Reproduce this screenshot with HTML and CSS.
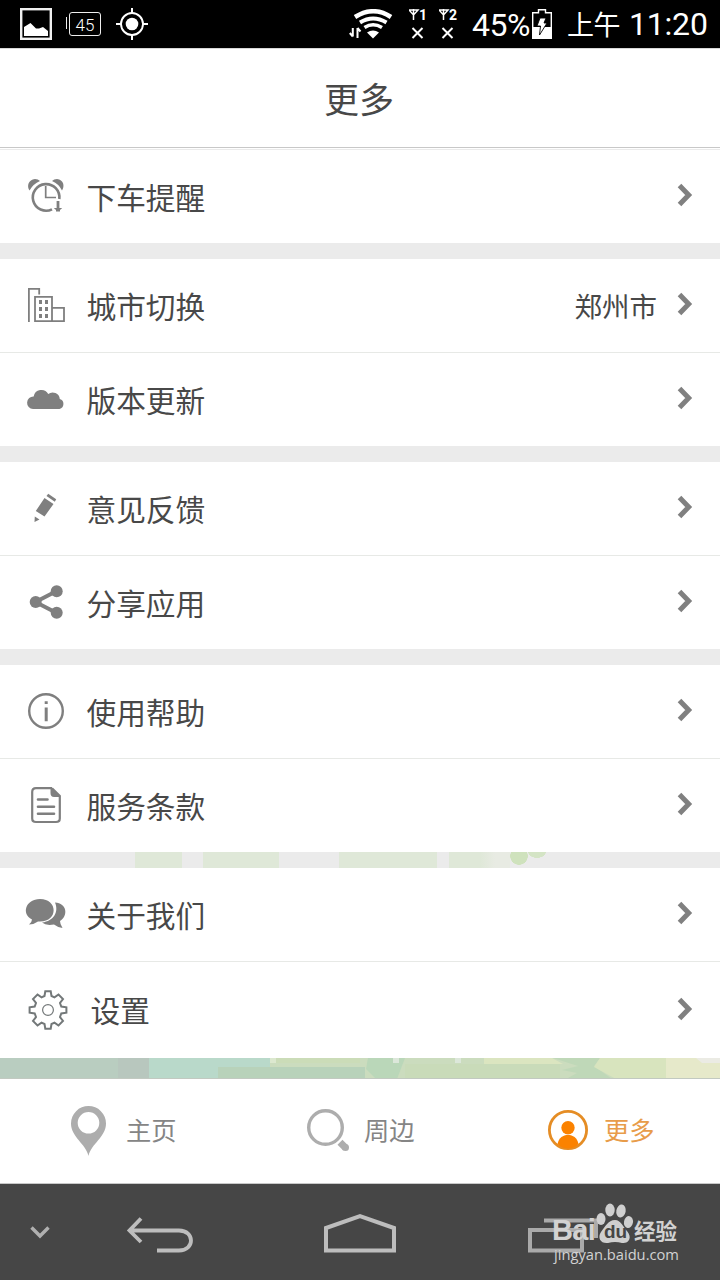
FILE: index.html
```html
<!DOCTYPE html>
<html lang="zh-CN">
<head>
<meta charset="utf-8">
<title>更多</title>
<link rel="stylesheet" href="styles.css">
</head>
<body>
<div class="screen">
  <header class="status">
    <div class="status-left">
      <svg width="32" height="32" viewBox="0 0 32 32"><rect x="1.200" y="1.200" width="29.600" height="29.600" fill="none" stroke="#f0f0f0" stroke-width="2.400"/><path d="M4 28V19L10.500 15L16 20.500H19L23 19L28 23V28Z" fill="#fff"/></svg>
      <span class="mini-battery">45</span>
      <svg width="32" height="32" viewBox="0 0 32 32" fill="none" stroke="#fff"><circle cx="16" cy="16" r="11" stroke-width="1.900"/><circle cx="16" cy="16" r="6.300" fill="#fff" stroke="none"/><path d="M16 0V5M16 27V32M0 16H5M27 16H32" stroke-width="2"/></svg>
    </div>
    <div class="status-right">
      <svg class="wifi" width="44" height="30" viewBox="0 0 44 30"><g fill="none" stroke="#fff"><path d="M6 8Q24.500-3.500 42 8" stroke-width="4.600"/><path d="M11 13.500Q24 5.500 37.500 13.500" stroke-width="4"/><path d="M15.500 18.500Q24 13 33 18.500" stroke-width="3.600"/><path d="M3.800 19V27.500M0.800 24L3.800 27.500M8.500 29V19M8.500 19L11.500 22.500" stroke-width="2"/></g><path d="M18 23.500Q24 19.500 30 23.500L24 29.500Z" fill="#fff"/></svg>
      <span class="sim"><svg width="18" height="30" viewBox="0 0 18 30" fill="none" stroke="#fff" stroke-width="1.500"><path d="M0 1H9L4.500 6ZM4.500 0V11"/><path d="M3.500 19L13.500 29M13.500 19L3.500 29" stroke-width="2"/></svg><b>1</b></span>
      <span class="sim"><svg width="18" height="30" viewBox="0 0 18 30" fill="none" stroke="#fff" stroke-width="1.500"><path d="M0 1H9L4.500 6ZM4.500 0V11"/><path d="M3.500 19L13.500 29M13.500 19L3.500 29" stroke-width="2"/></svg><b>2</b></span>
      <span class="percent">45%</span>
      <svg class="battery" width="20" height="30" viewBox="0 0 20 30"><path d="M.7 29V3.700H6.500V.7H13.500V3.700H19.300V29Z" fill="none" stroke="#fff" stroke-width="1.400"/><path d="M0 18H20V30H0Z" fill="#fff"/><path d="M8 9H14L12 14H15L7.500 26L8.500 17H5Z" fill="#fff" stroke="#000" stroke-width="0.900"/></svg>
      <span class="ampm">上午</span><span class="clock">11:20</span>
    </div>
  </header>

  <h1 class="title">更多</h1>

  <main class="list">
    <section class="group">
      <div class="row">
        <svg class="icon" viewBox="0 0 87 93"><path d="M29.500 40.500C26.500 36 28.500 29.500 35 29Q38 29 40 31Q33 34 29.500 40.500ZM62 40.500C65 36 63.500 29.500 57 29Q54 29 52 31Q59 34 62 40.500Z" fill="#7f7f7f"/><g fill="none" stroke="#7f7f7f"><path d="M52 59.300A13.300 13.300 0 1 1 59.300 49" stroke-width="2.600"/><path d="M45.700 36V47.500H56" stroke-width="1.700"/><path d="M58 51V58" stroke-width="2.800"/></g><path d="M53.800 58H62.200L60 60V61.500H56V60Z" fill="#7f7f7f"/></svg>
        <span class="label">下车提醒</span>
        <svg class="arrow" viewBox="0 0 16 24"><path d="M2.500 2.500L11.700 12L2.500 21.500"/></svg>
      </div>
    </section>
    <section class="group">
      <div class="row">
        <svg class="icon" viewBox="0 0 87 93"><g fill="none" stroke="#7f7f7f" stroke-width="1.800"><path d="M28.900 63V29.900H39.200V35.500M35 62.200V37.900H52V62.200ZM52 48.900H64V62.200H52"/></g><path d="M39 41h3v4h-3zM45 41h3v4h-3zM39 48h3v4h-3zM45 48h3v4h-3zM39 55h3v4h-3zM45 55h3v4h-3z" fill="#7f7f7f"/></svg>
        <span class="label">城市切换</span>
        <span class="value">郑州市</span>
        <svg class="arrow" viewBox="0 0 16 24"><path d="M2.500 2.500L11.700 12L2.500 21.500"/></svg>
      </div>
      <div class="row">
        <svg class="icon" viewBox="0 0 87 93"><path d="M33 56A5.700 5.700 0 0 1 33.700 43.500A7.800 7.800 0 0 1 48.200 41A7.200 7.200 0 0 1 59.800 46A5.200 5.200 0 0 1 59.500 56Z" fill="#7f7f7f"/></svg>
        <span class="label">版本更新</span>
        <svg class="arrow" viewBox="0 0 16 24"><path d="M2.500 2.500L11.700 12L2.500 21.500"/></svg>
      </div>
    </section>
    <section class="group">
      <div class="row">
        <svg class="icon" viewBox="0 0 87 93"><path d="M44.500 36L53.500 42L44.500 54.500L35.800 49ZM46.500 34L48.200 31.800L56.200 37.300L54.800 39.800ZM34.800 54.500L39.500 57.500L34.500 60Z" fill="#7f7f7f"/></svg>
        <span class="label">意见反馈</span>
        <svg class="arrow" viewBox="0 0 16 24"><path d="M2.500 2.500L11.700 12L2.500 21.500"/></svg>
      </div>
      <div class="row">
        <svg class="icon" viewBox="0 0 87 93"><path d="M56.700 35L35.500 46L56.700 57" fill="none" stroke="#7f7f7f" stroke-width="4"/><g fill="#7f7f7f"><circle cx="56.700" cy="35.300" r="6"/><circle cx="35.700" cy="46" r="6"/><circle cx="56.700" cy="56.800" r="6"/></g></svg>
        <span class="label">分享应用</span>
        <svg class="arrow" viewBox="0 0 16 24"><path d="M2.500 2.500L11.700 12L2.500 21.500"/></svg>
      </div>
    </section>
    <section class="group">
      <div class="row">
        <svg class="icon" viewBox="0 0 87 93" fill="none" stroke="#7f7f7f"><circle cx="46" cy="46" r="16.800" stroke-width="2.400"/><path d="M46.200 36.300V39M46.200 42.500V56.300" stroke-width="3"/></svg>
        <span class="label">使用帮助</span>
        <svg class="arrow" viewBox="0 0 16 24"><path d="M2.500 2.500L11.700 12L2.500 21.500"/></svg>
      </div>
      <div class="row">
        <svg class="icon" viewBox="0 0 87 93"><g fill="none" stroke="#7f7f7f" stroke-width="2.200"><path d="M52 29.200H36Q32.200 29.200 32.200 33V59.500Q32.200 63 36 63H56Q59.800 63 59.800 59.500V37L52 29.200"/><path d="M38 40.500H47.500M38 47.700H54M38 54.800H54" stroke-width="2.600" stroke-linecap="round"/></g><path d="M50.500 28.500L60.500 38H54Q50.500 38 50.500 34Z" fill="#7f7f7f"/></svg>
        <span class="label">服务条款</span>
        <svg class="arrow" viewBox="0 0 16 24"><path d="M2.500 2.500L11.700 12L2.500 21.500"/></svg>
      </div>
    </section>
    <section class="group">
      <div class="row">
        <svg class="icon" viewBox="0 0 87 93" fill="#7f7f7f"><path d="M55 34.500C67 35 68.500 48 60 53Q60 56 62.500 60Q57 59 54 56.500Q46 58 42 54.500C54 53 59 44 55 34.500Z"/><path d="M40 31C58 31 58.500 53.500 40 53.500H38Q34 56.500 29 56.500Q32 54 32 51.500C21 46 25.500 31 40 31Z"/></svg>
        <span class="label">关于我们</span>
        <svg class="arrow" viewBox="0 0 16 24"><path d="M2.500 2.500L11.700 12L2.500 21.500"/></svg>
      </div>
      <div class="row row-settings">
        <svg class="icon" viewBox="0 1 87 93" fill="none" stroke="#737879"><path d="M44.500 33L45.300 28.300H50.700L51.500 33L54.500 34.400L58.500 31.500L63 36L60 40L61.300 43.500L66.400 44.300V49.700L61.300 50.500L60 54L63 58L58.500 62.500L54.500 59.600L51.500 61L50.700 65.700H45.300L44.500 61L41.500 59.600L37.500 62.500L33 58L36 54L34.700 50.500L29.600 49.700V44.300L34.700 43.500L36 40L33 36L37.500 31.500L41.500 34.400Z" stroke-width="2"/><circle cx="48" cy="47" r="5.400" stroke-width="1.200"/></svg>
        <span class="label">设置</span>
        <svg class="arrow" viewBox="0 0 16 24"><path d="M2.500 2.500L11.700 12L2.500 21.500"/></svg>
      </div>
    </section>
  </main>
  <svg class="scenery" viewBox="0 0 720 21" preserveAspectRatio="none">
    <path d="M0 0H720V21H0Z" fill="#cbdcbe"/><path d="M0 0H118V21H0Z" fill="#b9cdc0"/><path d="M118 0H149V21H118Z" fill="#b8c7be"/><path d="M149 0H270V9H365V21H149Z" fill="#b9d9ca"/><path d="M218 9H365V21H218Z" fill="#b8d2ba"/><path d="M276 0H360V5H276Z" fill="#cbdcb8"/><path d="M270 0H276V5H270Z" fill="#dce8cf"/>
    <path d="M368 0H405L397 21H376L366 11Z" fill="#bad7b9"/><path d="M393 0H399V5H393ZM455 0H461V5H455Z" fill="#dce7da"/><path d="M405 6H560V21H405Z" fill="#c9dbb9"/><path d="M484 0H552L563 6H484Z" fill="#dbe5c0"/><path d="M553 0H600L594 8L612 21H566L577 15L562 12L578 8Z" fill="#bfd8b8"/><path d="M600 0H666V21H616L594 9Z" fill="#d8e4be"/><path d="M666 0H720V21H666Z" fill="#e6e9ca"/><path d="M696 0H720V5H702Z" fill="#ebebe4"/><path d="M0 20H720V21H0Z" fill="#c2c9c1"/>
  </svg>

  <nav class="tabs">
    <div class="tab"><svg width="126" height="104" viewBox="0 0 126 104"><path fill-rule="evenodd" d="M88.500 77C86 65 71 58 71 44.500A17.500 17.500 0 0 1 106 44.500C106 58 91 65 88.500 77ZM88.500 33A10.800 10.800 0 1 0 88.500 54.600A10.800 10.800 0 1 0 88.500 33Z" fill="#adadad"/></svg><span>主页</span></div>
    <div class="tab"><svg width="124" height="104" viewBox="0 0 124 104" fill="none" stroke="#adadad"><circle cx="85.500" cy="48.500" r="16.800" stroke-width="3.400"/><path d="M100 63.300L105.700 69" stroke-width="7"/><circle cx="105.500" cy="68.500" r="3.500" fill="#adadad" stroke="none"/></svg><span>周边</span></div>
    <div class="tab active"><svg width="124" height="104" viewBox="0 0 124 104"><circle cx="88" cy="51" r="18.600" fill="none" stroke="#e58d25" stroke-width="2.800"/><circle cx="88" cy="48.700" r="6.700" fill="#fb8200"/><path d="M77.500 65C79 58.500 83 56 88 56S97 58.500 98.500 65Q94 69.500 88 69.500T77.500 65Z" fill="#fb8200"/></svg><span>更多</span></div>
  </nav>

  <footer class="system-nav">
    <svg width="80" height="96" viewBox="0 0 80 96"><path d="M31.500 43.500L40 52L48.500 43.500" fill="none" stroke="#b0b0b0" stroke-width="3.400"/></svg>
    <svg width="160" height="96" viewBox="80 0 160 96"><path d="M141 34.500L129.500 46.500L141 58M129.500 46.500H179C195 46.500 195 66.500 179 66.500H157" fill="none" stroke="#bdbdbd" stroke-width="3.800"/></svg>
    <svg width="240" height="96" viewBox="240 0 240 96"><path d="M326 66.500V44L360 32L394 44V66.500Z" fill="none" stroke="#bdbdbd" stroke-width="4"/></svg>
    <svg width="240" height="96" viewBox="480 0 240 96"><path d="M530 46H582V66.500H530ZM544 36.500H596V54" fill="none" stroke="#aaa" stroke-width="4"/></svg>
    <div class="watermark">
      <div class="brand"><span class="bai">Bai</span><span class="paw"><svg width="38" height="42" viewBox="0 0 38 42" fill="#cfcfcf"><ellipse cx="5" cy="16" rx="4.500" ry="6"/><ellipse cx="14" cy="7" rx="4.700" ry="6.500"/><ellipse cx="25" cy="8" rx="4.700" ry="6.500" transform="rotate(10 25 8)"/><ellipse cx="32.500" cy="19" rx="4.500" ry="6" transform="rotate(10 32 19)"/><path d="M19 17C25 17 27 24 31 28C37 35 32 41 26 40Q19 38 12 40C5 41 1 35 5 29C9 24 12 17 19 17Z"/></svg><i>du</i></span><span class="jy">经验</span></div>
      <div class="site">jingyan.baidu.com</div>
    </div>
  </footer>
</div>
</body>
</html>
```
FILE: styles.css
```css
* { box-sizing: border-box; }
body { margin: 0; background: #fff; font-family: Roboto, "Noto Sans CJK SC", sans-serif; color: #484848; }
svg { display: block; flex: none; }
.screen { width: 720px; height: 1280px; display: flex; flex-direction: column; overflow: hidden; }

.status { height: 48px; flex: none; background: #000; color: #fff; display: flex; justify-content: space-between; padding: 0 12px 0 20px; }
.status-left { display: flex; align-items: center; }
.mini-battery { position: relative; width: 32px; height: 24px; margin: 0 15px 0 17px; border: 1.500px solid #eee; border-radius: 3px; font-size: 17px; font-weight: 300; line-height: 24px; text-align: center; }
.mini-battery::before { content: ""; position: absolute; left: -4px; top: 4px; width: 1px; height: 12px; background: #eee; }
.status-right { display: flex; align-items: center; line-height: 48px; white-space: nowrap; }
.wifi { margin-right: 16px; }
.sim { display: flex; position: relative; width: 18px; margin-right: 12px; }
.sim b { position: absolute; left: 10px; top: -1px; font: bold 14px/14px Roboto, sans-serif; }
.percent { width: 61px; margin-left: 3px; font-size: 32px; letter-spacing: -.5px; padding-top: 2px; }
.battery { margin-right: 15px; margin-left: -1px; }
.ampm { width: 62px; font-size: 27px; letter-spacing: -.5px; padding-top: 3px; }
.clock { width: 79px; font-size: 32px; letter-spacing: -.2px; }

.title { height: 102px; flex: none; margin: 0; padding-top: 5px; text-align: center; font-size: 35px; line-height: 97px; text-indent: -2px; font-weight: 400; background: linear-gradient(#d8d8d8, #d8d8d8) 0 0 / 100% 1px no-repeat, linear-gradient(#c8c8c8 0 1px, #fff 1px 2px, #ebebeb 2px) 0 100% / 100% 3px no-repeat, #fff; }

.list { display: flex; flex-direction: column; gap: 16px; flex: none; background: linear-gradient(90deg, #ebebeb 135px, #dfe8d8 135px 182px, #ebebeb 182px 203px, #dfe8d8 203px 279px, #ebebeb 279px 339px, #dfe8d8 339px 437px, #ebebeb 437px 449px, #dfe8d8 449px 480px, #e8ebe3 495px 510px, transparent 510px) 0 702px / 100% 16px no-repeat, radial-gradient(ellipse 9px 9px at 519px 706px, #cfe2bd 95%, transparent) no-repeat, radial-gradient(ellipse 9px 6px at 537px 702px, #d4e4c5 95%, transparent) no-repeat, #ebebeb; }
.group { background: #fff; }
.row { height: 93px; display: flex; align-items: center; padding-right: 27px; }
.row + .row { height: 94px; border-top: 1px solid #e7e9e6; }
.row + .row-settings { height: 97px; }
.icon { width: 87px; height: 93px; }
.label { font-size: 29.700px; line-height: 44px; padding-top: 4px; margin-left: -.5px; }
.value { margin-left: auto; margin-right: 20px; font-size: 27.500px; line-height: 40px; padding-top: 4px; }
.arrow { width: 16px; height: 24px; margin-left: auto; margin-bottom: 3px; fill: none; stroke: #808080; stroke-width: 5; }
.value + .arrow { margin-left: 0; }
.row-settings .label { padding-left: 4px; }
.row-settings .arrow { margin-bottom: 2px; }
.scenery { width: 720px; height: 21px; }

.tabs { height: 105px; flex: none; display: grid; grid-template-columns: repeat(3, 240px); border-bottom: 1px solid #c8c8c8; }
.tab { display: flex; align-items: center; font-size: 25.300px; color: #858585; }
.tab span { padding-bottom: 5px; }
.active { color: #e89c4a; }

.system-nav { height: 96px; flex: none; background: #464646; display: flex; position: relative; }
.watermark { position: absolute; left: 552px; top: 18px; width: 130px; color: #d2d2d2; }
.brand { display: flex; height: 43px; align-items: flex-end; }
.bai { width: 44px; font: bold 29px/30px "Liberation Sans", sans-serif; letter-spacing: -.7px; }
.paw { position: relative; width: 38px; height: 42px; }
.paw i { position: absolute; left: 8px; top: 19px; color: #464646; font: bold 19px/20px "Liberation Sans", sans-serif; }
.jy { font-size: 21.500px; line-height: 24px; font-weight: 700; padding-bottom: 1px; }
.site { padding-left: 2px; font: 14.700px/18px "Open Sans", sans-serif; white-space: nowrap; }
```
